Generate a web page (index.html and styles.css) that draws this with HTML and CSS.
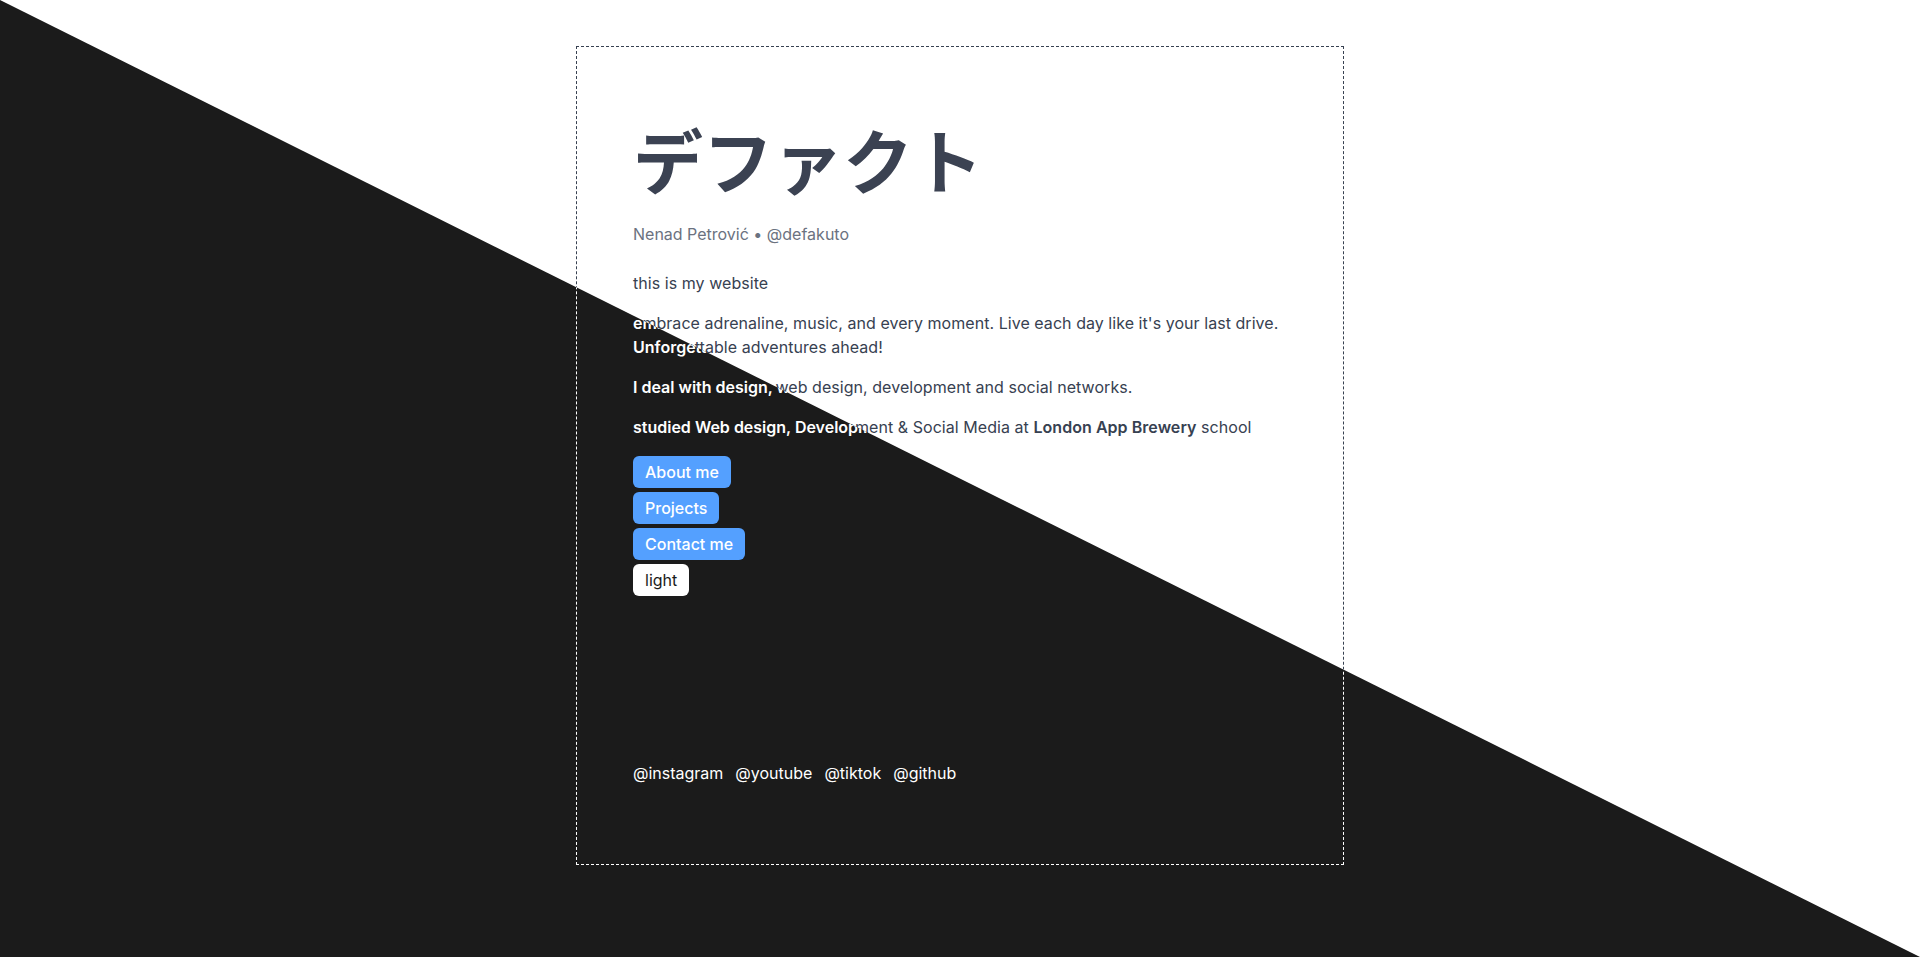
FILE: index.html
```html
<!DOCTYPE html>
<html lang="en">
<head>
<meta charset="utf-8">
<title>デファクト</title>
<link rel="stylesheet" href="styles.css">
</head>
<body>
<div class="stage">
  <div class="layer layer-light">
    <main class="card">
      <h1 class="title">デファクト</h1>
      <p class="byline">Nenad Petrović • @defakuto</p>
      <p class="text">this is my website</p>
      <p class="text">embrace adrenaline, music, and every moment. Live each day like it's your last drive. Unforgettable adventures ahead!</p>
      <p class="text">I deal with design, web design, development and social networks.</p>
      <p class="text">studied Web design, Development &amp; Social Media at <b class="strong">London App Brewery</b> school</p>
      <nav class="menu">
        <a class="btn btn-blue" href="#">About me</a>
        <a class="btn btn-blue" href="#">Projects</a>
        <a class="btn btn-blue" href="#">Contact me</a>
        <button class="btn btn-theme">light</button>
      </nav>
      <div class="socials">
        <a class="social" href="#">@instagram</a>
        <a class="social" href="#">@youtube</a>
        <a class="social" href="#">@tiktok</a>
        <a class="social" href="#">@github</a>
      </div>
    </main>
  </div>
  <div class="layer layer-dark" aria-hidden="true">
    <main class="card">
      <h1 class="title">デファクト</h1>
      <p class="byline">Nenad Petrović • @defakuto</p>
      <p class="text">this is my website</p>
      <p class="text">embrace adrenaline, music, and every moment. Live each day like it's your last drive. Unforgettable adventures ahead!</p>
      <p class="text">I deal with design, web design, development and social networks.</p>
      <p class="text">studied Web design, Development &amp; Social Media at <b class="strong">London App Brewery</b> school</p>
      <nav class="menu">
        <a class="btn btn-blue" href="#">About me</a>
        <a class="btn btn-blue" href="#">Projects</a>
        <a class="btn btn-blue" href="#">Contact me</a>
        <button class="btn btn-theme">light</button>
      </nav>
      <div class="socials">
        <a class="social" href="#">@instagram</a>
        <a class="social" href="#">@youtube</a>
        <a class="social" href="#">@tiktok</a>
        <a class="social" href="#">@github</a>
      </div>
    </main>
  </div>
</div>
</body>
</html>
```
FILE: styles.css
```css
* { box-sizing: border-box; }

html, body {
  margin: 0;
  padding: 0;
  background: #ffffff;
  font-family: Inter, "Noto Sans", "Noto Sans CJK JP", sans-serif;
  font-size: 16px;
  line-height: 24px;
}

.stage {
  position: relative;
  width: 100%;
  height: 957px;
  overflow: hidden;
}

.layer {
  height: 100%;
  padding-top: 46px;
}

.layer-light {
  background: #ffffff;
  color: #374151;
}

.layer-dark {
  position: absolute;
  inset: 0;
  background: #1b1b1b;
  color: #ffffff;
  clip-path: polygon(0 0, 100% 100%, 0 100%);
}

.card {
  width: 768px;
  height: 819px;
  margin: 0 auto;
  border: 1px dashed #374151;
  padding: 56px 56px 79px;
  display: flex;
  flex-direction: column;
  align-items: flex-start;
}

.layer-dark .card { border-color: #ffffff; }

.title {
  margin: 4px 0 0;
  font-family: "Noto Sans CJK JP", "Noto Sans", sans-serif;
  font-size: 70px;
  line-height: 104px;
  font-weight: 700;
  color: #3b4252;
}

.layer-dark .title { color: #ffffff; }

.byline {
  margin: 11px 0 0;
  color: #6b7280;
}

.layer-dark .byline { color: #d1d5db; }

.text {
  margin: 25px 0 0;
  letter-spacing: 0.05px;
}

.text + .text { margin-top: 16px; }

.strong { font-weight: 600; }

.layer-dark .text { font-weight: 600; letter-spacing: 0; }

.menu {
  margin-top: 17px;
  display: flex;
  flex-direction: column;
  align-items: flex-start;
  gap: 4px;
}

.btn {
  display: block;
  padding: 4px 12px;
  border: 0;
  border-radius: 6px;
  font-family: inherit;
  font-size: 16px;
  line-height: 24px;
  text-decoration: none;
  cursor: pointer;
}

.btn-blue {
  background: #54a0ff;
  color: #ffffff;
  font-weight: 500;
}

.btn-theme {
  background: #ffffff;
  color: #1b1b1b;
  font-weight: 400;
}

.socials {
  margin-top: auto;
  display: flex;
  gap: 12px;
}

.social {
  color: inherit;
  text-decoration: none;
  font-weight: 400;
}
```
